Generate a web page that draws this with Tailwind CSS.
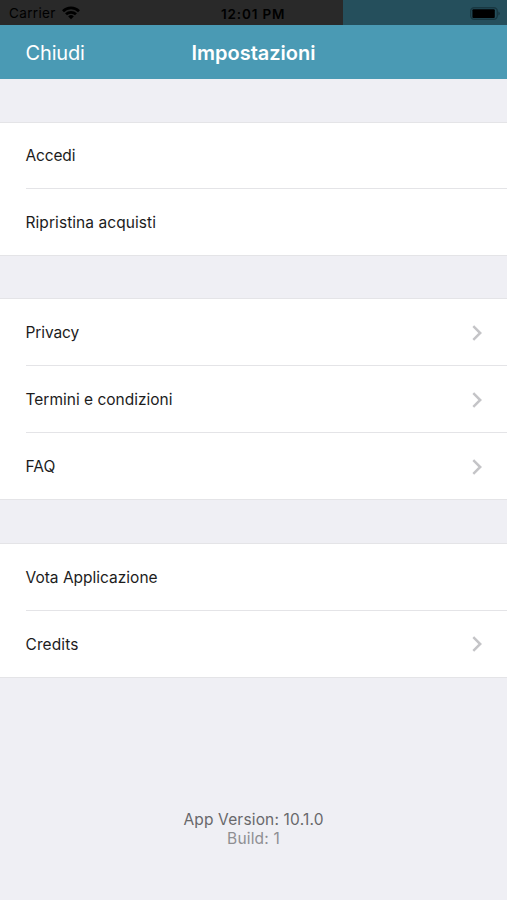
<!DOCTYPE html>
<html lang="it">

<head>
    <meta charset="UTF-8" />
    <meta name="viewport" content="width=device-width, initial-scale=1.0" />
    <title>Impostazioni</title>
    <script src="https://cdn.jsdelivr.net/npm/@tailwindcss/browser@4"></script>
</head>

<body class="h-[900px] overflow-hidden bg-[#efeff4] font-['Inter','Liberation_Sans',sans-serif] text-[#1c1c1c]">
    <!-- Status bar -->
    <div class="flex h-[25px] bg-[#292929] text-black">
        <div class="grid w-[343px] grid-cols-[221px_auto] items-center pt-[3px] leading-none">
            <div class="flex items-center gap-[6px] pl-[9px]">
                <span class="text-[13.5px] tracking-[0.35px]">Carrier</span>
                <svg class="h-[14px] w-[18px] -translate-y-px" viewBox="0 0 18 14" fill="none" stroke="currentColor" stroke-width="2.7">
                    <path d="M1 5.2a11.5 11.5 0 0 1 16 0" />
                    <path d="M4 8.3a7.2 7.2 0 0 1 10 0" />
                    <path d="M9 13.2 6.2 10.4a4 4 0 0 1 5.6 0z" fill="currentColor" stroke="none" />
                </svg>
            </div>
            <span class="pt-px text-[13.5px] font-semibold tracking-[0.85px]">12:01 PM</span>
        </div>
        <div class="flex flex-1 items-center justify-end bg-[#254f5c] pr-[7px] pt-[1px]">
            <svg class="h-[13px] w-[30px]" viewBox="0 0 30 13">
                <rect x="0.7" y="0.7" width="26.6" height="11.6" rx="3.5" fill="none" stroke="#193842" stroke-width="1.4" />
                <rect x="2.4" y="2.2" width="22.4" height="8.8" rx="1" fill="#000" />
                <path d="M28.3 4.4a2.2 2.2 0 0 1 0 4.2z" fill="#193842" />
            </svg>
        </div>
    </div>

    <!-- Navbar -->
    <header class="grid h-[54px] grid-cols-[1fr_auto_1fr] items-center bg-[#4a9ab4] px-[25.5px] pt-px text-white">
        <a class="text-[20px] tracking-[-0.15px]">Chiudi</a>
        <h1 class="text-[20px] font-semibold">Impostazioni</h1>
    </header>

    <main class="text-[15.5px]">
        <section class="mt-[43px] border-y border-[#e4e4e7] bg-white">
            <div class="pl-[25.5px]">
                <div class="flex h-[66px] items-center border-b border-[#e4e4e7] tracking-[-0.15px]">Accedi</div>
                <div class="flex h-[66px] items-center pt-[2px] tracking-[0.07px]">Ripristina acquisti</div>
            </div>
        </section>

        <section class="mt-[42px] border-y border-[#e4e4e7] bg-white">
            <div class="pl-[25.5px]">
                <div class="flex h-[67px] items-center justify-between border-b border-[#e4e4e7] pr-[25px] pt-[2px]">
                    <span class="tracking-[-0.1px]">Privacy</span>
                    <svg class="h-[16px] w-[10px]" viewBox="0 0 10 16" fill="none" stroke="#c4c4c7" stroke-width="2.5"><path d="M1.3 1.2 8.2 8l-6.9 6.8" /></svg>
                </div>
                <div class="flex h-[67px] items-center justify-between border-b border-[#e4e4e7] pr-[25px] pt-[2px]">
                    <span>Termini e condizioni</span>
                    <svg class="h-[16px] w-[10px]" viewBox="0 0 10 16" fill="none" stroke="#c4c4c7" stroke-width="2.5"><path d="M1.3 1.2 8.2 8l-6.9 6.8" /></svg>
                </div>
                <div class="flex h-[66px] items-center justify-between pr-[25px] pt-[2px]">
                    <span>FAQ</span>
                    <svg class="h-[16px] w-[10px]" viewBox="0 0 10 16" fill="none" stroke="#c4c4c7" stroke-width="2.5"><path d="M1.3 1.2 8.2 8l-6.9 6.8" /></svg>
                </div>
            </div>
        </section>

        <section class="mt-[43px] border-y border-[#e4e4e7] bg-white">
            <div class="pl-[25.5px]">
                <div class="flex h-[67px] items-center border-b border-[#e4e4e7] pt-px">Vota Applicazione</div>
                <div class="flex h-[66px] items-center justify-between pr-[25px]">
                    <span class="pt-px tracking-[0.1px]">Credits</span>
                    <svg class="h-[16px] w-[10px]" viewBox="0 0 10 16" fill="none" stroke="#c4c4c7" stroke-width="2.5"><path d="M1.3 1.2 8.2 8l-6.9 6.8" /></svg>
                </div>
            </div>
        </section>
    </main>

    <footer class="mt-[132px] text-center text-[15.5px] leading-[19px] tracking-[0.17px]">
        <p class="text-[#68686b]">App Version: 10.1.0</p>
        <p class="text-[#8e8e92]">Build: 1</p>
    </footer>
</body>

</html>
